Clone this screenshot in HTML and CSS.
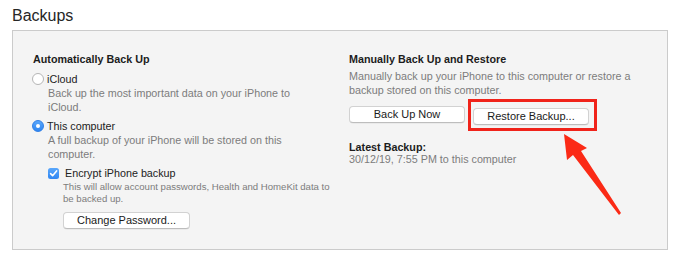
FILE: index.html
```html
<!DOCTYPE html>
<html>
<head>
<meta charset="utf-8">
<link rel="stylesheet" href="styles.css">
</head>
<body>
<div class="page">
  <h1 class="title">Backups</h1>
  <section class="panel">
    <div class="col col-left">
      <div class="heading">Automatically Back Up</div>
      <div class="option opt-first">
        <span class="radio"></span><span class="label">iCloud</span>
      </div>
      <div class="desc">Back up the most important data on your iPhone to<br>iCloud.</div>
      <div class="option opt-second">
        <span class="radio checked"></span><span class="label">This computer</span>
      </div>
      <div class="desc">A full backup of your iPhone will be stored on this<br>computer.</div>
      <div class="check-row">
        <span class="checkbox"><svg width="11" height="11" viewBox="0 0 11 11"><path d="M2.6 5.6 L4.6 7.7 L8.6 2.9" fill="none" stroke="#fff" stroke-width="1.6" stroke-linecap="round" stroke-linejoin="round"/></svg></span>
        <span class="label">Encrypt iPhone backup</span>
      </div>
      <div class="small-desc">This will allow account passwords, Health and HomeKit data to<br>be backed up.</div>
      <button class="btn btn-change">Change Password...</button>
    </div>
    <div class="col col-right">
      <div class="heading">Manually Back Up and Restore</div>
      <div class="desc desc-right">Manually back up your iPhone to this computer or restore a<br>backup stored on this computer.</div>
      <div class="btn-row">
        <button class="btn btn-wide">Back Up Now</button>
        <div class="highlight-wrap">
          <button class="btn btn-wide">Restore Backup...</button>
          <span class="highlight"></span>
        </div>
      </div>
      <div class="latest">
        <div class="latest-title">Latest Backup:</div>
        <div class="latest-date">30/12/19, 7:55 PM to this computer</div>
      </div>
    </div>
  </section>
  <svg class="arrow" width="680" height="259" viewBox="0 0 680 259">
    <polygon points="564,134 587,148 581,151 621,213 619,215 573,155 567,160" fill="#fb2a16"/>
  </svg>
</div>
</body>
</html>
```

FILE: styles.css
```css
* { box-sizing: border-box; }
html, body { margin: 0; padding: 0; background: #ffffff; }
body {
  font-family: "Liberation Sans", Arial, sans-serif;
  color: #222;
}
.page {
  position: relative;
  width: 680px;
  height: 259px;
  overflow: hidden;
}
.title {
  margin: 6px 0 4px 12px;
  font-size: 16px;
  line-height: 20px;
  font-weight: normal;
  color: #262626;
}
.panel {
  margin-left: 12px;
  width: 656px;
  height: 220px;
  background: #f4f4f4;
  border: 1px solid #cbcbcb;
  padding: 21px 0 0 20px;
  display: grid;
  grid-template-columns: 316px 1fr;
}
.col { display: flex; flex-direction: column; align-items: flex-start; }
.heading {
  font-size: 10.75px;
  line-height: 14px;
  font-weight: bold;
  color: #1c1c1c;
}
.option {
  display: flex;
  align-items: center;
  gap: 3px;
  font-size: 10.75px;
  line-height: 14px;
  color: #222;
}
.opt-first { margin-top: 6px; margin-left: -1px; }
.opt-second { margin-top: 5px; margin-left: -1px; }
.radio {
  width: 12px;
  height: 12px;
  border-radius: 50%;
  background: #fff;
  border: 1px solid #b5b5b5;
  display: inline-flex;
  align-items: center;
  justify-content: center;
}
.radio.checked {
  background: linear-gradient(#5aa7fb, #2f86f2);
  border-color: #2f7fe6;
}
.radio.checked::after {
  content: "";
  width: 4px;
  height: 4px;
  border-radius: 50%;
  background: #fff;
}
.desc {
  margin-left: 15px;
  font-size: 10.75px;
  line-height: 14px;
  color: #7c7c7c;
}
.desc-right { margin-left: 0; margin-top: 3px; }
.check-row {
  margin-top: 5px;
  margin-left: 15px;
  display: flex;
  align-items: center;
  gap: 6px;
  font-size: 10.75px;
  line-height: 14px;
  color: #222;
}
.checkbox {
  width: 11px;
  height: 11px;
  border-radius: 2.5px;
  background: linear-gradient(#5aa7fb, #2f86f2);
  display: inline-flex;
}
.small-desc {
  margin-top: 1px;
  margin-left: 30px;
  font-size: 9.6px;
  line-height: 12px;
  color: #7c7c7c;
}
.btn {
  font-family: "Liberation Sans", Arial, sans-serif;
  font-size: 11px;
  line-height: 15px;
  color: #1a1a1a;
  background: #fff;
  border: 1px solid #d2d2d2;
  border-bottom-color: #bdbdbd;
  border-radius: 4px;
  padding: 0;
  height: 17px;
  box-shadow: 0 0.5px 0.5px rgba(0,0,0,0.08);
}
.btn-change {
  margin-top: 7px;
  margin-left: 30px;
  width: 127px;
}
.btn-row {
  margin-top: 9px;
  display: flex;
  gap: 8px;
}
.btn-wide { width: 116px; }
.highlight-wrap { position: relative; }
.highlight {
  position: absolute;
  left: -5px;
  right: -8px;
  top: -7px;
  bottom: -6px;
  border: 3px solid #f0231a;
}
.latest { margin-top: 16px; }
.latest-title {
  font-size: 10.75px;
  line-height: 12px;
  font-weight: bold;
  color: #1c1c1c;
}
.latest-date {
  font-size: 10.75px;
  line-height: 12px;
  color: #7c7c7c;
}
.arrow {
  position: absolute;
  left: 0;
  top: 0;
  pointer-events: none;
}
```
